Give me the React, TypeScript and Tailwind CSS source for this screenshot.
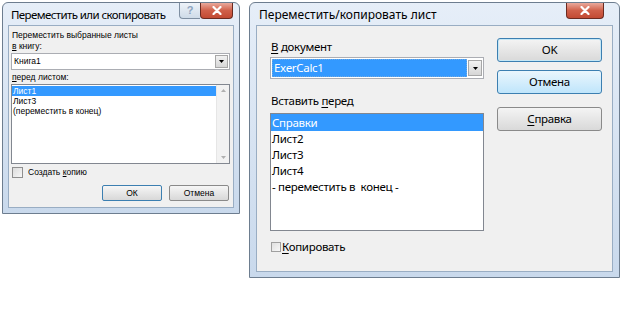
import React from "react";

const ui = { fontFamily: '"Noto Sans", "Open Sans", sans-serif' };
const small = { fontFamily: '"Liberation Sans", "DejaVu Sans", sans-serif' };

const CloseButton = ({ w }: { w: string }) => (
  <div
    className={`${w} h-[16px] rounded-b-[4px] border border-t-0 border-[#6b2a20] bg-gradient-to-b from-[#e9a99c] via-[#d0604a] to-[#c24a33] flex items-center justify-center`}
  >
    <svg width="10" height="9" viewBox="0 0 10 9">
      <path d="M1.5 1 L8.5 8 M8.5 1 L1.5 8" stroke="#fff" strokeWidth="2.2" strokeLinecap="round" />
    </svg>
  </div>
);

const MoveCopyExcel = () => {
  return (
    <div className="w-[238px] h-[212px] mt-[2px] ml-[2px] rounded-t-[6px] border border-[#6d7d8f] bg-gradient-to-b from-[#e6eef8] to-[#c9d9ec] flex flex-col px-[5px] pb-[5px]">
      <div className="h-[22px] flex items-start justify-between">
        <div className="min-w-0 overflow-hidden pt-[3px] pl-[3px] text-[11.5px] leading-[18px] text-black whitespace-nowrap tracking-[-0.6px]" style={ui}>
          Переместить или скопировать
        </div>
        <div className="flex mr-[1px] shrink-0">
          <div className="w-[21px] h-[16px] rounded-bl-[4px] border border-t-0 border-r-0 border-[#7f8fa2] bg-gradient-to-b from-[#eef3f9] to-[#cfdbe8] flex items-center justify-center">
            <span className="text-[11px] leading-none font-bold text-[#8ca3bf]" style={small}>?</span>
          </div>
          <CloseButton w="w-[33px]" />
        </div>
      </div>
      <div className="flex-1 border border-[#99adc3] bg-[#f0f0f0] pl-[2px] pr-[3px] flex flex-col text-[8.5px] text-black" style={small}>
        <div className="mt-[4px] pl-[1px] leading-[11px]">Переместить выбранные листы</div>
        <div className="pl-[1px] leading-[11px]">
          <u className="underline-offset-1">в</u> книгу:
        </div>
        <div className="mt-[1px] h-[17px] border border-[#abadb3] bg-white flex items-center justify-between pl-[2px] pr-[1px]">
          <span>Книга1</span>
          <div className="w-[13px] h-[13px] border border-[#a7a7a7] bg-gradient-to-b from-[#f2f2f2] to-[#d6d6d6] flex items-center justify-center">
            <svg width="5" height="3" viewBox="0 0 5 3">
              <path d="M0 0 H5 L2.5 3 Z" fill="#000" />
            </svg>
          </div>
        </div>
        <div className="mt-[2px] pl-[1px] leading-[11px]">
          <u className="underline-offset-1">п</u>еред листом:
        </div>
        <div className="mt-[1px] h-[80px] border border-[#828790] bg-white flex">
          <div className="flex-1 pt-[1px] flex flex-col">
            <div className="h-[10px] leading-[10px] bg-[#3399ff] text-white pl-[1px]">Лист1</div>
            <div className="h-[10px] leading-[10px] pl-[1px]">Лист3</div>
            <div className="h-[10px] leading-[10px] pl-[1px]">(переместить в конец)</div>
          </div>
          <div className="w-[13px] bg-[#f2f2f2] border-l border-[#e6e6e6] flex flex-col justify-between items-center py-[4px]">
            <svg width="5" height="3" viewBox="0 0 5 3">
              <path d="M0 3 H5 L2.5 0 Z" fill="#b0b0b0" />
            </svg>
            <svg width="5" height="3" viewBox="0 0 5 3">
              <path d="M0 0 H5 L2.5 3 Z" fill="#b0b0b0" />
            </svg>
          </div>
        </div>
        <div className="mt-[3px] pl-[1px] h-[11px] flex items-center gap-[5px]">
          <div className="w-[11px] h-[11px] border border-[#8f8f8f] bg-gradient-to-br from-[#dcdcdc] to-[#f7f7f7]" />
          <span>
            Создать <u className="underline-offset-1">к</u>опию
          </span>
        </div>
        <div className="mt-[7px] flex justify-end gap-[7px] pr-[1px]">
          <div className="w-[60px] h-[16px] rounded-[2px] border border-[#3c7fb1] bg-gradient-to-b from-[#f6f6f6] to-[#d8d8d8] flex items-center justify-center">
            ОК
          </div>
          <div className="w-[60px] h-[16px] rounded-[2px] border border-[#8a8a8a] bg-gradient-to-b from-[#f6f6f6] to-[#d8d8d8] flex items-center justify-center">
            Отмена
          </div>
        </div>
      </div>
    </div>
  );
};

const WinButton = ({ children, variant }: { children: React.ReactNode; variant: "focus" | "hover" | "normal" }) => {
  const cls =
    variant === "focus"
      ? "border-[#3c7fb1] bg-gradient-to-b from-[#f4f4f4] to-[#d9d9d9] shadow-[inset_0_0_0_1px_#c5e7f5]"
      : variant === "hover"
        ? "border-[#3c7fb1] bg-gradient-to-b from-[#eaf6fd] to-[#bfe5fb]"
        : "border-[#8a8a8a] bg-gradient-to-b from-[#f4f4f4] to-[#d9d9d9]";
  return (
    <div className={`w-[105px] h-[24px] rounded-[3px] border ${cls} flex items-center justify-center text-[11.5px] text-black`}>
      {children}
    </div>
  );
};

const MoveCopyCalc = () => {
  return (
    <div className="w-[371px] h-[276px] mt-[2px] ml-[9px] rounded-t-[6px] border border-[#6d7d8f] bg-gradient-to-b from-[#e6eef8] to-[#c9d9ec] flex flex-col px-[6px] pb-[5px]">
      <div className="h-[22px] flex items-start justify-between">
        <div className="pt-[3px] pl-[3px] text-[12px] leading-[18px] text-black whitespace-nowrap" style={ui}>
          Переместить/копировать лист
        </div>
        <div className="mr-[9px]">
          <CloseButton w="w-[38px]" />
        </div>
      </div>
      <div className="flex-1 border border-[#99adc3] bg-[#f0f0f0] flex pl-[13px] pr-[10px] text-[11.5px] tracking-[-0.3px] text-black" style={ui}>
        <div className="w-[215px] flex flex-col pt-[13px]">
          <div className="leading-[16px] pl-[1px]">
            <u className="underline-offset-2">В</u> документ
          </div>
          <div className="mt-[2px] h-[22px] border border-[#abadb3] bg-white flex items-center pl-[1px] pr-[1px] gap-[1px]">
            <div className="flex-1 h-[18px] bg-[#3399ff] border border-dotted border-[#6fa8e0] text-white leading-[16px] pl-[1px]">
              ExerCalc1
            </div>
            <div className="w-[14px] h-[16px] border border-[#a7a7a7] bg-gradient-to-b from-[#f2f2f2] to-[#d6d6d6] flex items-center justify-center">
              <svg width="5" height="3" viewBox="0 0 5 3">
                <path d="M0 0 H5 L2.5 3 Z" fill="#000" />
              </svg>
            </div>
          </div>
          <div className="mt-[14px] leading-[16px] pl-[1px]">
            Вставить <u className="underline-offset-2">п</u>еред
          </div>
          <div className="mt-[4px] h-[118px] border border-[#828790] bg-white flex flex-col">
            <div className="h-[17px] leading-[17px] bg-[#3399ff] text-white pl-[1px]">Справки</div>
            <div className="h-[16px] leading-[16px] pl-[1px]">Лист2</div>
            <div className="h-[16px] leading-[16px] pl-[1px]">Лист3</div>
            <div className="h-[16px] leading-[16px] pl-[1px]">Лист4</div>
            <div className="h-[16px] leading-[16px] pl-[1px] whitespace-pre">- переместить в  конец -</div>
          </div>
          <div className="mt-[8px] flex items-center gap-[1px] pl-[1px] leading-[16px]">
            <div className="w-[10px] h-[10px] border border-[#a0a0a0] bg-gradient-to-br from-[#e0e0e0] to-[#f8f8f8]" />
            <span>
              <u className="underline-offset-2">К</u>опировать
            </span>
          </div>
        </div>
        <div className="ml-[13px] flex flex-col pt-[12px]">
          <WinButton variant="focus">OK</WinButton>
          <div className="mt-[8px]">
            <WinButton variant="hover">Отмена</WinButton>
          </div>
          <div className="mt-[13px]">
            <WinButton variant="normal">
              <span>
                <u className="underline-offset-2">С</u>правка
              </span>
            </WinButton>
          </div>
        </div>
      </div>
    </div>
  );
};

export default function App() {
  return (
    <div className="w-[623px] h-[323px] bg-white flex items-start overflow-hidden">
      <MoveCopyExcel />
      <MoveCopyCalc />
    </div>
  );
}
